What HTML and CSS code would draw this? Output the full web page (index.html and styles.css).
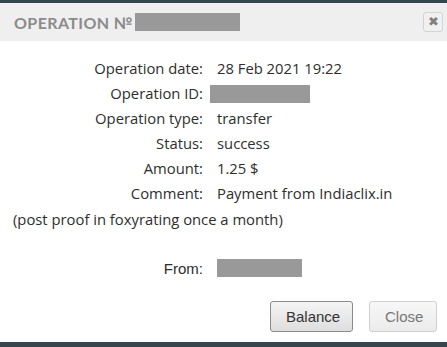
FILE: index.html
```
<!DOCTYPE html>
<html lang="en">
<head>
    <meta charset="UTF-8">
    <title>Operation</title>
    <link rel="stylesheet" href="styles.css">
</head>
<body>
    <div class="dialog">
        <div class="dialog-header">
            <span class="dialog-title">Operation №</span>
            <span class="hidden-box title-box"></span>
            <button class="close-x">&#10006;</button>
        </div>
        <div class="dialog-body">
            <div class="info">
                <span class="label">Operation date:</span><span>28 Feb 2021 19:22</span>
                <span class="label">Operation ID:</span><span><span class="hidden-box id-box"></span></span>
                <span class="label">Operation type:</span><span>transfer</span>
                <span class="label">Status:</span><span>success</span>
                <span class="label">Amount:</span><span>1.25 $</span>
                <span class="label">Comment:</span><span>Payment from Indiaclix.in</span>
            </div>
            <p class="note">(post proof in foxyrating once a month)</p>
            <div class="from-row">
                <span class="from-label">From:</span>
                <span class="hidden-box from-box"></span>
            </div>
        </div>
        <div class="dialog-buttons">
            <button class="btn btn-main">Balance</button>
            <button class="btn btn-light">Close</button>
        </div>
    </div>
</body>
</html>
```
FILE: styles.css
```
body {
    margin: 0;
    background-color: #36444c;
    font-family: "Open Sans", sans-serif;
}
.dialog {
    margin-top: 3px;
    height: 339px;
    background-color: white;
    display: flex;
    flex-direction: column;
}
.dialog-header {
    height: 38px;
    background-color: #efefef;
    display: flex;
    align-items: center;
    padding: 0 4px 0 14px;
}
.dialog-title {
    font-family: Lato, sans-serif;
    font-size: 16px;
    font-weight: bold;
    letter-spacing: 0.4px;
    text-transform: uppercase;
    color: #8b8b8b;
}
.hidden-box {
    display: inline-block;
    background-color: #999999;
}
.title-box {
    width: 105px;
    height: 18px;
    margin-left: 2px;
}
.close-x {
    margin-left: auto;
    width: 20px;
    height: 20px;
    padding: 0;
    border: 1px solid #d4d4d4;
    border-radius: 3px;
    background-color: #f0f0f0;
    color: #808080;
    font-size: 13px;
    line-height: 18px;
    cursor: pointer;
}
.dialog-body {
    flex: 1;
    padding: 14px 0 0 13px;
    color: #2e2e2e;
    font-size: 14.8px;
}
.info {
    display: grid;
    grid-template-columns: 190px auto;
    grid-auto-rows: 25px;
    column-gap: 14px;
    align-items: center;
    justify-content: start;
}
.info .label {
    text-align: right;
}
.id-box {
    width: 100px;
    height: 18px;
    margin-left: -7px;
    vertical-align: middle;
}
.note {
    margin: 2px 0 0;
    height: 25px;
    line-height: 25px;
}
.from-row {
    margin-top: 27px;
    display: flex;
    align-items: center;
    font-family: "Liberation Sans", Arial, sans-serif;
    font-size: 15px;
}
.from-label {
    width: 190px;
    text-align: right;
    padding-right: 14px;
}
.from-box {
    width: 85px;
    height: 18px;
}
.dialog-buttons {
    display: flex;
    justify-content: flex-end;
    gap: 16px;
    padding: 0 10px 10px 0;
}
.btn {
    height: 31px;
    padding: 0 15px;
    font-family: "Liberation Sans", Arial, sans-serif;
    font-size: 15px;
    border-radius: 3px;
    cursor: pointer;
}
.btn-main {
    width: 83px;
    border: 1px solid #8c8c8c;
    background: linear-gradient(#f4f4f4, #dedede);
    color: #333;
}
.btn-light {
    width: 68px;
    border: 1px solid #d0d0d0;
    background: linear-gradient(#f7f7f7, #ebebeb);
    color: #777;
}
```
